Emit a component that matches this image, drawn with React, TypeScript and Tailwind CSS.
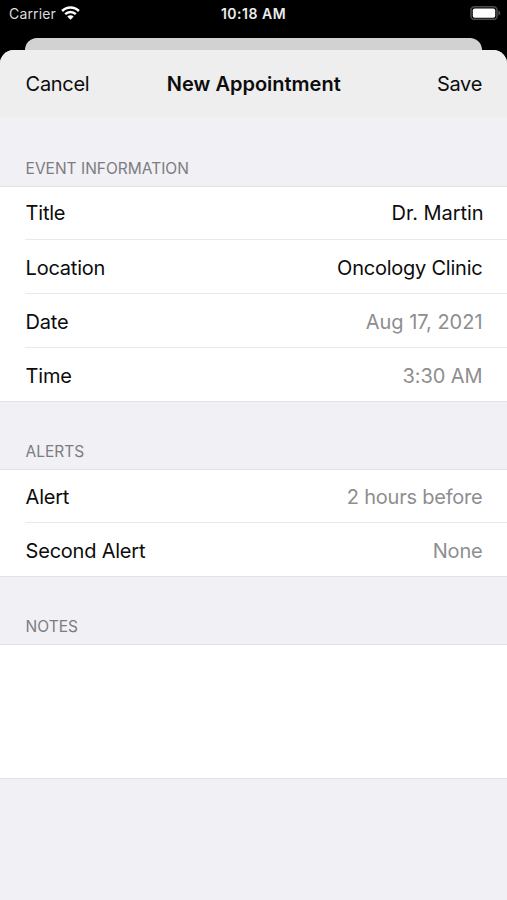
type RowProps = {
  label: string;
  value: string;
  muted?: boolean;
  rowClass: string;
  valueClass: string;
};

const eventRows: RowProps[] = [
  { label: "Title", value: "Dr. Martin", rowClass: "h-[52px]", valueClass: "tracking-[-0.05px] -mr-px" },
  { label: "Location", value: "Oncology Clinic", rowClass: "h-[54px] border-t pt-0.5", valueClass: "tracking-[-0.23px]" },
  { label: "Date", value: "Aug 17, 2021", muted: true, rowClass: "h-[54px] border-t pt-0.5", valueClass: "tracking-[-0.02px]" },
  { label: "Time", value: "3:30 AM", muted: true, rowClass: "h-[54px] border-t pt-0.5", valueClass: "tracking-[-0.1px]" },
];

const alertRows: RowProps[] = [
  { label: "Alert", value: "2 hours before", muted: true, rowClass: "h-[52px] pt-px", valueClass: "tracking-[-0.22px]" },
  { label: "Second Alert", value: "None", muted: true, rowClass: "h-[54px] border-t pt-0.5", valueClass: "tracking-[-0.2px]" },
];

const StatusBar = () => (
  <div className="grid h-[38px] grid-cols-3 items-start px-[9px] text-white">
    <div className="flex h-[27px] items-center gap-[5px] text-[14px] tracking-[0.15px] text-[#dcdcdc]">
      <span>Carrier</span>
      <svg width="19" height="14" viewBox="0 0 19 14" fill="none" stroke="#fff" strokeWidth="2.5" className="-mt-px">
        <path d="M1.1 5C5.8 0.3 13.2 0.3 17.9 5" />
        <path d="M4.2 8.2C7.2 5.3 11.8 5.3 14.8 8.2" />
        <path d="M9.5 13.8L6.3 10.6C8.1 8.9 10.9 8.9 12.7 10.6Z" fill="#fff" stroke="none" />
      </svg>
    </div>
    <div className="flex h-[27px] items-center justify-center text-[14px] font-semibold tracking-[0.5px] text-[#ececec]">
      10:18 AM
    </div>
    <div className="flex h-[27px] items-center justify-end">
      <svg width="31" height="14" viewBox="0 0 31 14" className="-mt-px -mr-[3px]">
        <rect x="1" y="0.8" width="26" height="12.6" rx="3.4" fill="none" stroke="#4c4c4c" strokeWidth="1.6" />
        <rect x="2.8" y="2.4" width="22.4" height="9.4" rx="1.8" fill="#fff" />
        <path d="M28.4 4.6C31 5.6 31 8.6 28.4 9.6Z" fill="#4c4c4c" />
      </svg>
    </div>
  </div>
);

const SectionTitle = ({ children }: { children: string }) => (
  <h2 className="flex h-[67px] items-end pb-2 pl-[25.6px] text-[15.5px] leading-[18px] text-[#7c7c81]">{children}</h2>
);

const Rows = ({ rows }: { rows: RowProps[] }) => (
  <div className="border-y border-[#e3e3e6] bg-white pl-[25px]">
    {rows.map((row) => (
      <div
        key={row.label}
        className={`flex items-center justify-between border-[#e9e9eb] pr-[24.5px] pl-[0.6px] text-[20px] ${row.rowClass}`}
      >
        <span className="tracking-[-0.22px]">{row.label}</span>
        <span className={`${row.muted ? "text-[#8e8e90]" : ""} ${row.valueClass}`}>{row.value}</span>
      </div>
    ))}
  </div>
);

export default function App() {
  return (
    <div className="h-[900px] w-[507px] overflow-hidden bg-black font-['Inter',sans-serif] text-[#0c0c0c]">
      <StatusBar />
      {/* edge of the screen behind the sheet */}
      <div className="mx-[25px] h-3 rounded-t-[12px] bg-[#d2d2d2]" />
      <div className="h-[850px] overflow-hidden rounded-t-[14px] bg-[#f0f0f5]">
        <div className="grid h-[67px] grid-cols-[1fr_auto_1fr] items-center bg-[#eeeeee] px-[25px] pt-px text-[20px]">
          <span className="pl-[0.6px] tracking-[-0.3px]">Cancel</span>
          <h1 className="pl-[0.6px] font-semibold">New Appointment</h1>
          <span className="text-right tracking-[-0.3px]">Save</span>
        </div>
        <div className="pt-[2px]">
          <SectionTitle>EVENT INFORMATION</SectionTitle>
        </div>
        <Rows rows={eventRows} />
        <SectionTitle>ALERTS</SectionTitle>
        <Rows rows={alertRows} />
        <SectionTitle>NOTES</SectionTitle>
        <div className="h-[135px] border-y border-[#e3e3e6] bg-white" />
      </div>
    </div>
  );
}
